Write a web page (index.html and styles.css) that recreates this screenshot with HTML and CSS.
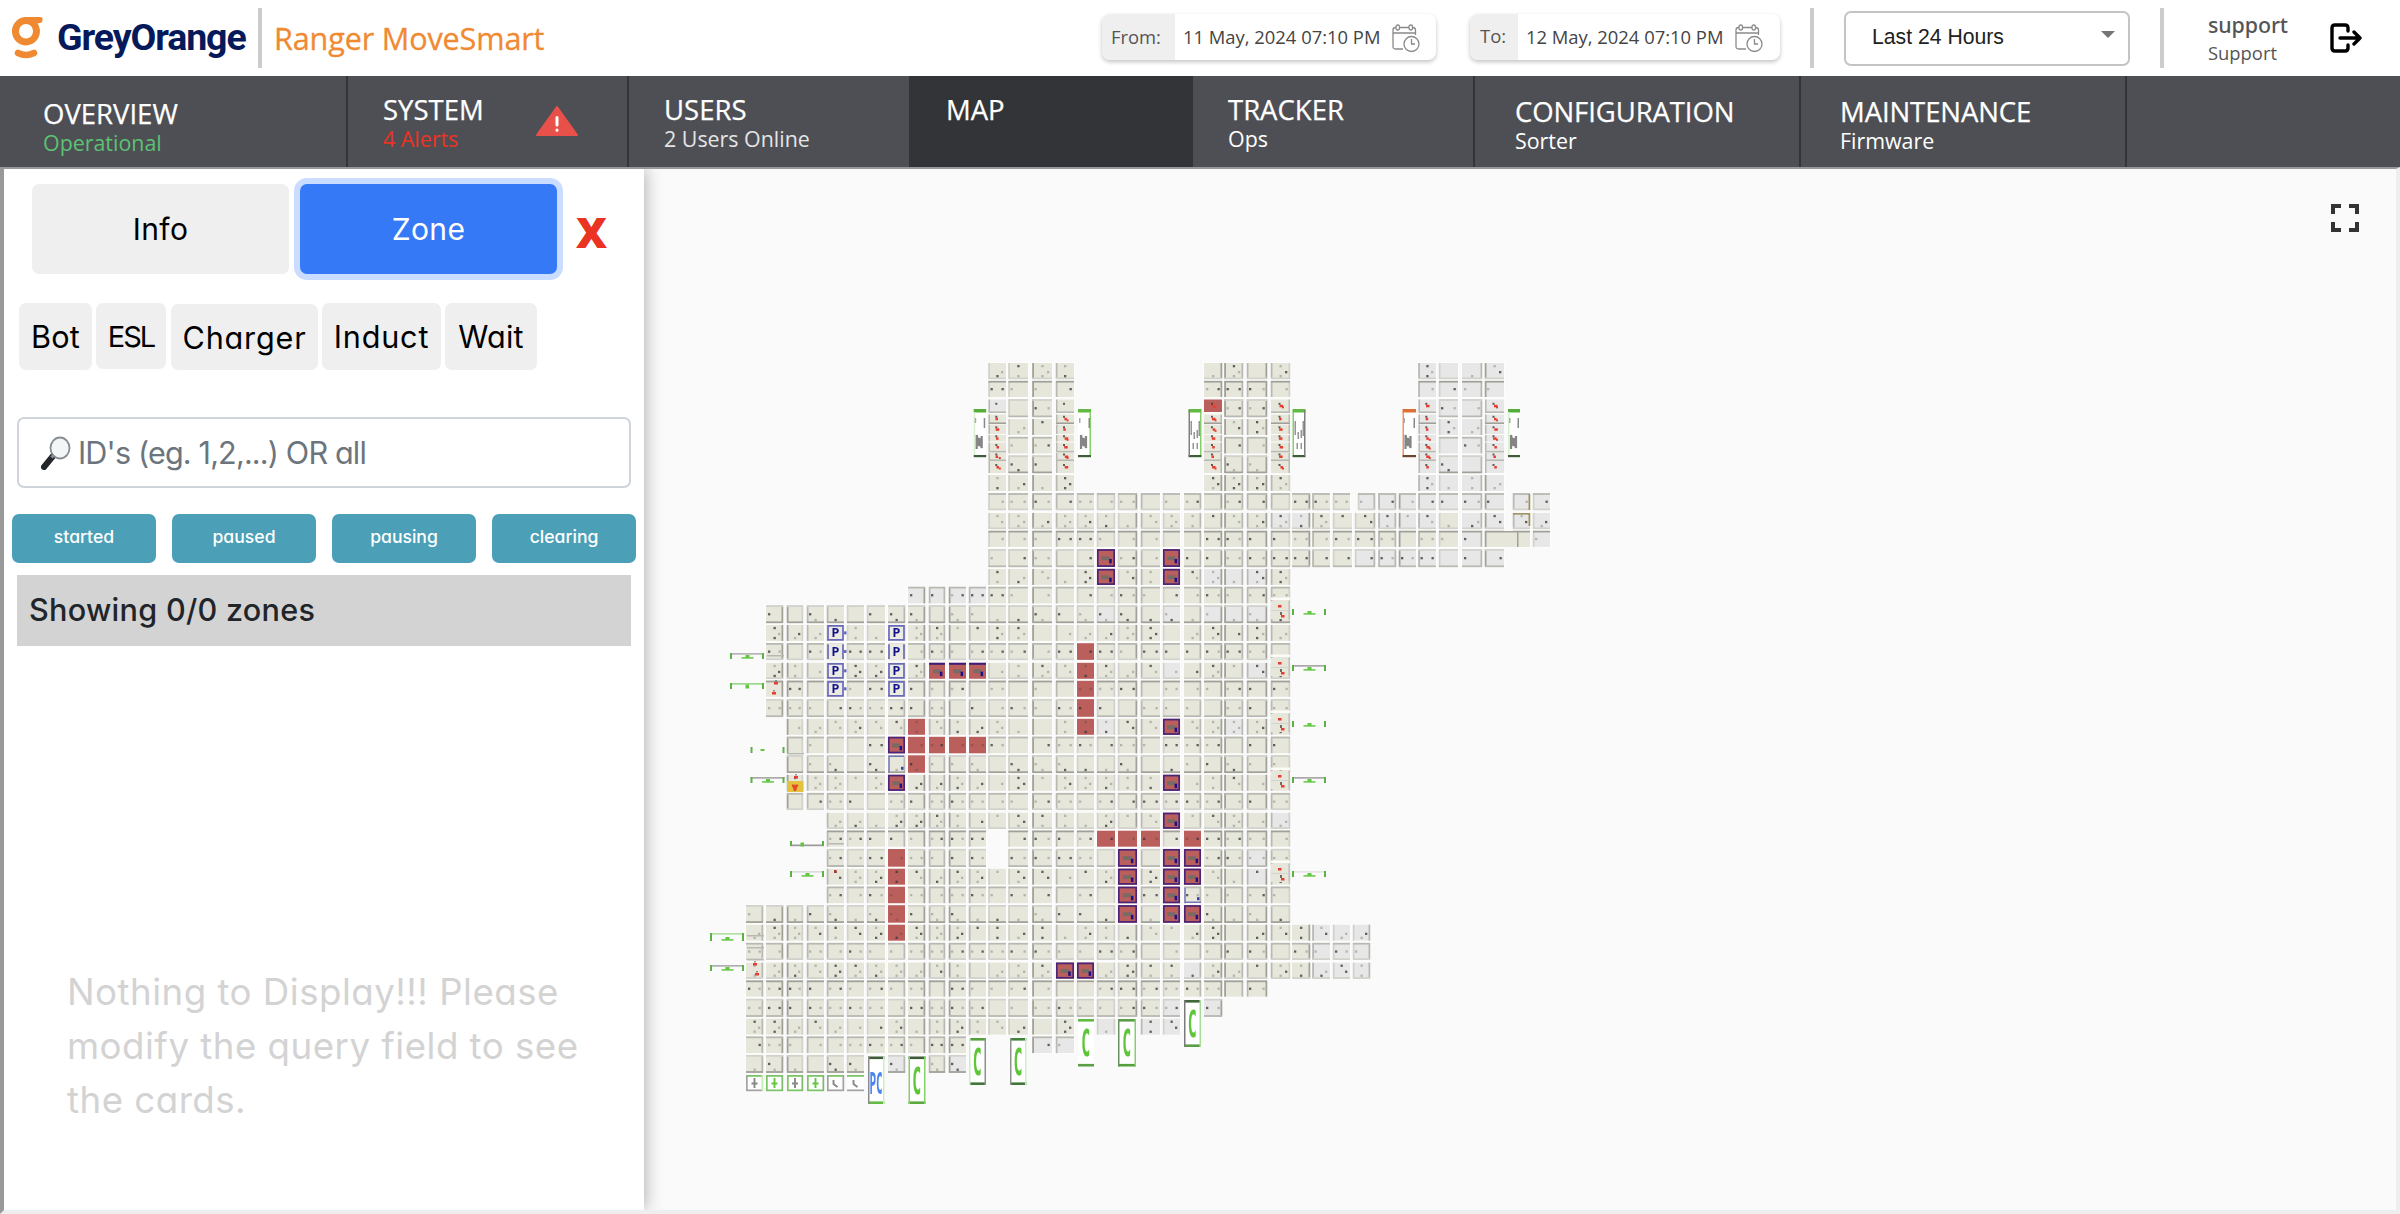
FILE: index.html
```
<!DOCTYPE html>
<html lang="en">
<head>
<meta charset="utf-8">
<title>Ranger MoveSmart</title>
<link rel="stylesheet" href="styles.css">
</head>
<body>
<header class="topbar">
  <svg class="logo" viewBox="0 0 32 42" width="32" height="42">
    <path fill="#f08a32" fill-rule="evenodd" d="M14 0H28Q31 0 30.600 3Q30 6.200 27 6.200H25.500A14 14.200 0 1 1 14 0ZM14 7A7 7.200 0 1 0 14 21.500A7 7.200 0 1 0 14 7Z"/>
    <path d="M6 36Q14 40 22 36" fill="none" stroke="#f08a32" stroke-width="6.500" stroke-linecap="round"/>
  </svg>
  <span class="brand">GreyOrange</span>
  <i class="rule"></i>
  <span class="product">Ranger MoveSmart</span>
  <div class="date date-from"><b>From:</b><span>11 May, 2024 07:10 PM</span>
    <svg width="28" height="30" viewBox="0 0 28 30" fill="none" stroke="#8a8a8a" stroke-width="1.300"><path d="M11 25H3.500Q1 25 1 22.500V6Q1 3.500 3.500 3.500H4M7.500 3.500H17M20.500 3.500Q23.500 3.500 23.500 6V11M1 9H23.500"/><rect x="4" y="1" width="3.500" height="5" rx="1.700"/><rect x="17" y="1" width="3.500" height="5" rx="1.700"/><circle cx="19.500" cy="20" r="7.500"/><path d="M19.500 15V20H23"/></svg>
  </div>
  <div class="date date-to"><b>To:</b><span>12 May, 2024 07:10 PM</span>
    <svg width="28" height="30" viewBox="0 0 28 30" fill="none" stroke="#8a8a8a" stroke-width="1.300"><path d="M11 25H3.500Q1 25 1 22.500V6Q1 3.500 3.500 3.500H4M7.500 3.500H17M20.500 3.500Q23.500 3.500 23.500 6V11M1 9H23.500"/><rect x="4" y="1" width="3.500" height="5" rx="1.700"/><rect x="17" y="1" width="3.500" height="5" rx="1.700"/><circle cx="19.500" cy="20" r="7.500"/><path d="M19.500 15V20H23"/></svg>
  </div>
  <i class="rule rule-range"></i>
  <div class="range"><span>Last 24 Hours</span><svg width="14" height="7" viewBox="0 0 14 7"><path d="M0 0H14L7 7Z" fill="#757575"/></svg></div>
  <i class="rule rule-user"></i>
  <div class="user"><strong>support</strong><span>Support</span></div>
  <svg class="logout" width="32" height="30" viewBox="0 0 32 30" fill="none" stroke="#000" stroke-width="3.400" stroke-linecap="round" stroke-linejoin="round"><path d="M18 8V5Q18 2 15 2H5Q2 2 2 5V25Q2 28 5 28H15Q18 28 18 25V22M10 15H30M24 9L30 15L24 21"/></svg>
</header>
<nav class="nav">
  <a class="tab overview"><h2>OVERVIEW</h2><p class="ok">Operational</p></a>
  <a class="tab system"><h2>SYSTEM</h2><p class="bad">4 Alerts</p>
    <svg class="alert" width="42" height="32" viewBox="0 0 42 32"><path d="M21 2L41 30H1Z" fill="#e8504a" stroke="#e8504a" stroke-width="2" stroke-linejoin="round"/><path d="M21 12.500V20M21 25V25.200" stroke="#fff" stroke-width="3" stroke-linecap="round"/></svg></a>
  <a class="tab"><h2>USERS</h2><p class="soft">2 Users Online</p></a>
  <a class="tab map-tab"><h2>MAP</h2></a>
  <a class="tab"><h2>TRACKER</h2><p>Ops</p></a>
  <a class="tab wide"><h2>CONFIGURATION</h2><p>Sorter</p></a>
  <a class="tab wide"><h2>MAINTENANCE</h2><p>Firmware</p></a>
</nav>
<main class="frame">
  <aside class="panel">
    <div class="modes"><button class="mode">Info</button><button class="mode active">Zone</button><span class="close">X</span></div>
    <div class="kinds"><button class="bot">Bot</button><button class="esl">ESL</button><button class="charger">Charger</button><button>Induct</button><button>Wait</button></div>
    <div class="search">
      <svg width="30" height="34" viewBox="0 0 30 34"><path d="M3 31L12 20" stroke="#222529" stroke-width="6" stroke-linecap="round"/><path d="M10.500 21.500L14 17.500" stroke="#8b9095" stroke-width="3"/><ellipse cx="19" cy="12" rx="9.500" ry="10.500" fill="#f3f6f7" stroke="#888d91" stroke-width="1.800"/></svg>
      <span>ID's (eg. 1,2,...) OR all</span>
    </div>
    <div class="states"><button>started</button><button>paused</button><button>pausing</button><button>clearing</button></div>
    <div class="count">Showing 0/0 zones</div>
    <p class="empty">Nothing to Display!!! Please<br>modify the query field to see<br>the cards.</p>
  </aside>
  <section class="canvas">
    <svg id="floor" width="1752" height="1041" viewBox="644 169 1752 1041"></svg>
    <svg class="expand" width="28" height="28" viewBox="0 0 28 28" fill="none" stroke="#333" stroke-width="4"><path d="M2 10V2H10M18 2H26V10M26 18V26H18M10 26H2V18"/></svg>
  </section>
</main>
<script src="map.js"></script>
</body>
</html>
```
FILE: styles.css
```
* { box-sizing: border-box; }
body { margin: 0; width: 2400px; height: 1214px; overflow: hidden; background: #fff; font-family: "Open Sans", "Noto Sans", sans-serif; display: flex; flex-direction: column; }
h2, p { margin: 0; font-weight: 400; }
button { border: 0; padding: 0; font: inherit; background: #efefef; color: #000; border-radius: 7px; }

.topbar { height: 76px; display: flex; align-items: flex-start; flex: none; white-space: nowrap; }
.logo { margin: 17px 0 0 12px; }
.brand { font: 700 37.500px/44px Roboto, sans-serif; letter-spacing: -1.100px; color: #06195a; margin: 14.500px 0 0 13px; width: 189px; }
.rule { width: 4px; height: 60px; margin-top: 8px; margin-left: 12px; background: #ccc; }
.product { font-size: 30.600px; line-height: 40px; letter-spacing: -.15px; color: #f08a32; -webkit-text-stroke: .3px #f08a32; margin: 17.500px 0 0 12px; width: 280px; }
.date { height: 46px; margin-top: 14px; display: flex; border-radius: 8px; overflow: hidden; box-shadow: 0 2px 4px rgba(0,0,0,.24); font-size: 18.400px; line-height: 46px; color: #444; background: #fff; }
.date b { font-weight: 400; background: #efefef; color: #555; }
.date svg { margin-top: 10px; }
.date-from { margin-left: 548px; width: 334px; }
.date-from b { width: 73px; padding-left: 9px; }
.date span { padding-left: 8px; width: 217px; }
.date-to { margin-left: 34px; width: 310px; }
.date-to b { width: 48px; padding-left: 10px; line-height: 44px; }
.rule-range { margin-left: 30px; }
.range { margin: 11px 0 0 30px; width: 286px; height: 55px; border: 2px solid #c4c4c4; border-radius: 7px; display: flex; justify-content: space-between; font: 21.200px/47px "Liberation Sans", Arial, sans-serif; color: #212121; padding: 0 13px 0 26px; }
.range svg { margin-top: 18px; }
.rule-user { margin-left: 30px; }
.user { margin: 10px 0 0 44px; width: 122px; color: #555; display: flex; flex-direction: column; }
.user strong { font-size: 21.400px; line-height: 29px; font-weight: 500; font-family: "Noto Sans", sans-serif; letter-spacing: -.1px; }
.user span { font-size: 18.400px; line-height: 28px; }
.logout { margin-top: 23px; }

.nav { height: 91px; background: #4e4f55; display: flex; flex: none; color: #fff; }
.tab { width: 282px; border-right: 2px solid #333438; padding: 20px 0 0 35px; position: relative; }
.tab h2 { font-size: 27.500px; line-height: 28px; -webkit-text-stroke: .25px #fff; }
.tab p { font-size: 21.400px; line-height: 28px; margin-top: 1px; }
.tab .ok { color: #5bc273; }
.tab .bad { color: #ea3323; }
.tab .soft { color: #e4e4e4; }
.overview { width: 348px; padding: 24px 0 0 43px; }
.system { width: 281px; }
.alert { position: absolute; left: 188px; top: 29px; }
.map-tab { background: #333438; }
.wide { width: 326px; padding: 22px 0 0 40px; }
.tab.wide + .wide { margin-left: -1px; width: 327px; }
.wide h2 { letter-spacing: -.1px; }

.frame { height: 1047px; border: 4px solid #eee; border-left-color: #999; border-top: 2px solid #98989c; display: flex; background: #fafafa; position: relative; z-index: 0; }
.panel { width: 640px; background: #fff; box-shadow: 2px 0 16px rgba(0,0,0,.28); position: relative; font-family: Inter, sans-serif; font-feature-settings: "cv11"; clip-path: inset(0 -30px 0 0); }
.modes { display: flex; gap: 11px; padding: 15px 0 0 28px; font-size: 30px; height: 105px; }
.mode { width: 257px; height: 90px; letter-spacing: .4px; }
.active { background: #3579f6; color: #fff; box-shadow: 0 0 0 6px #cadcff; }
.close { font: 900 43px/96px "Open Sans", sans-serif; color: #eb3323; margin-left: 8px; }
.kinds { display: flex; gap: 4px; padding: 29px 0 0 15px; font-size: 30.600px; letter-spacing: .2px; align-items: flex-start; }
.kinds button { height: 67px; padding: 0 11px; width: 92px; white-space: nowrap; letter-spacing: .2px; }
.kinds .bot { width: 73px; }
.kinds .esl { width: 70px; height: 66px; font-size: 29px; letter-spacing: -2px; }
.kinds .charger { width: 147px; margin: 1px 0 0 1px; height: 66px; letter-spacing: .8px; }
.kinds button:nth-child(4) { width: 119px; letter-spacing: .8px; }
.search { margin: 47px 13px 0; height: 71px; border: 2px solid #ced4da; border-radius: 7px; display: flex; align-items: center; padding-left: 22px; gap: 7px; font-size: 30.600px; letter-spacing: -.85px; color: #6c757d; }
.states { display: flex; gap: 16px; padding: 26px 0 0 8px; }
.states button { width: 144px; height: 49px; background: #4b9fb7; color: #fff; font-size: 17.600px; font-weight: 500; line-height: 45px; padding-bottom: 4px; }
.count { margin: 12px 13px 0; height: 71px; background: #d3d3d3; padding-left: 12px; font-size: 30.600px; font-weight: 500; line-height: 70px; letter-spacing: .27px; color: #212529; }
.empty { margin: 319px 0 0 63px; font-size: 36.700px; line-height: 54px; color: #d3d3d3; letter-spacing: .47px; }

.canvas { flex: 1; position: relative; z-index: -1; }
#floor { display: block; filter: blur(.45px); }
.expand { position: absolute; right: 37px; top: 35px; }
```
FILE: map.js
```
// Column and row extents of the floor grid
const X = [[746,763],[766,783],[787,803],[807,824],[827,844],[847,864],[867,885],[888,905],[908,925],[929,945],[949,966],[969,986],[988.5,1006],[1008.5,1028],[1032.5,1052],[1056,1074],[1077,1094],[1097,1115],[1118,1137],[1141,1160],[1163,1180],[1184,1201],[1204,1222],[1224.500,1243],[1247,1267],[1271,1290],[1292,1310],[1312.500,1330],[1333,1352],[1355,1375],[1378.500,1396],[1399,1416],[1418.500,1436],[1439,1458],[1462,1482],[1485,1504],[1513,1530],[1533,1550]];
const Y = [];
const P = [[363,379],[381,397],[399.300,417],[419,435],[437,453.500],[455.500,473],[475,491],[493.300,510]];
for (let r = 0; r < 38; r++) { const k = Math.floor(r / 8), o = k * 149.900; Y.push([P[r % 8][0] + o, P[r % 8][1] + o]); }
const colX = (r, c) => {
  if (r >= 30 && c === 28) return [1333, 1350];
  if (r >= 30 && c === 29) return [1353, 1370];
  if (r === 7 && c === 28) return [1333, 1350];
  if (r === 7 && c === 29) return [1358, 1375];
  return X[c];
};

const span = (a, b) => Array.from({ length: b - a + 1 }, (_, i) => a + i);
const rows = r => {
  if (r < 7) return [...span(12, 15), ...span(22, 25), ...span(32, 35)];
  if (r < 10) return span(12, 37);
  if (r < 11) return span(12, 35);
  if (r < 12) return span(12, 25);
  if (r < 13) return span(8, 25);
  if (r < 19) return span(1, 25);
  if (r < 24) return span(2, 25);
  if (r < 29) return span(4, 25).filter(c => !((r === 25 || r === 26) && c === 12));
  if (r < 30) return span(0, 25);
  if (r < 33) return span(0, 29);
  if (r < 34) return span(0, 24);
  if (r < 35) return span(0, 22).filter(c => c !== 21);
  if (r < 36) return [...span(0, 15), 17, 19, 20];
  if (r < 37) return [...span(0, 10), 14, 15];
  return [...span(0, 5), 7, 9, 10];
};
const grey = { 2: [12], 7: span(29, 37), 8: [25, 26, 30, 31, 32, 34, 35, 36, 37], 9: [34, 37], 10: span(29, 35), 11: [22, 23, 24], 12: [8, 9, 10, 11], 13: [17, 20, 22, 23, 24], 16: [20, 24], 19: [17, 23], 24: [25], 26: [24], 27: [24], 30: [27, 28, 29], 31: [27, 28, 29], 32: [21, 27, 28, 29], 34: [20, 22], 35: [17, 19, 20], 36: [14, 15], 37: [7, 10] };
const red = { 2: [22], 15: [16], 16: [16], 17: [16], 18: [16], 19: [8, 16], 20: [8, 9, 10, 11], 21: [8], 25: [17, 18, 19, 21], 26: [7], 27: [7], 28: [7], 29: [7], 30: [7] };
const busy = { 10: [17, 20], 11: [17, 20], 16: [9, 10, 11], 19: [20], 20: [7], 22: [7, 20], 24: [20], 26: [18, 20, 21], 27: [18, 20, 21], 28: [18, 20], 29: [18, 20, 21], 32: [15, 16] };
const has = (t, r, c) => (t[r] || []).includes(c);

// Wall weight on each side, per column and per row in the repeating band
const LEFT  = ['', '', 'd', 'm', 'm', 'l', 'l', '', '', 'm', 'd', 'm', 'l', 'l', 'd', 'm', 'l', 'l', 'l', 'm', 'l', '', '', 'd', 'm', 'm', '', 'm', 'l', 'l', 'm', 'd', 'm', 'l', '', 'd', 'm', 'l'];
const RIGHT = ['m', 'd', 'l', '', '', '', '', 'm', 'd', 'm', '', '', '', '', '', '', '', 'l', 'd', '', '', 'm', 'd', 'm', 'd', 'l', 'd', '', '', 'm', 'm', '', '', '', 'm', '', '', ''];
const TOP = ['', 'd', 'l', '', 'm', 'l', '', 'm'], BOTTOM = ['l', '', 'm', '', '', 'd', '', 'l'];
const tone = { d: '#a1a19a', m: '#b9b9b3', l: '#d2d2cc' };

let out = '';
const box = (x, y, w, h, f, o) => { out += `<rect x="${x.toFixed(1)}" y="${y.toFixed(1)}" width="${w.toFixed(1)}" height="${h.toFixed(1)}" fill="${f}"${o ? ` opacity="${o}"` : ''}/>`; };
const rnd = (a, b, k) => { const v = Math.sin(a * 12.9898 + b * 78.233 + k * 37.719) * 43758.5453; return v - Math.floor(v); };
const induct = [12, 15, 22, 25, 32, 35];
const body = (r, c) => has(grey, r, c) || (c >= 32 && r < 7) ? '#e7e7e7' : '#e6e7da';

for (let r = 0; r < 38; r++) for (const c of rows(r)) {
  const [x0, x1] = colX(r, c), [y0, y1] = Y[r], w = x1 - x0, h = y1 - y0;
  if (r > 1 && r < 6 && induct.includes(c)) continue;
  box(x0 - 1, y0 - 1, w + 2, h + 2, '#fff', .55);
  const hot = has(red, r, c), run = has(busy, r, c);
  box(x0, y0, w, h, hot || run ? '#bb5f5c' : body(r, c));
  if (run) {
    out += r === 16
      ? `<path d="M${x0} ${y0 + 1}H${x1}" stroke="#3c1d7c" stroke-width="2"/>`
      : `<rect x="${x0 + .8}" y="${y0 + .8}" width="${w - 1.6}" height="${h - 1.6}" fill="none" stroke="#4a2478" stroke-width="1.700"/>`;
    box(x0 + w * .25, y0 + h * .4, w * .45, 4, '#7a6a65'); box(x0 + w * .68, y0 + h * .55, 2.500, 4.500, '#1d0f86');
  } else {
    const m = r % 8, e = [LEFT[c], RIGHT[c], TOP[m], BOTTOM[m]];
    if (!hot) {
      if (e[0]) box(x0 - .3, y0, 1.800, h, tone[e[0]]);
      if (e[1]) box(x1 - 1.500, y0, 1.800, h, tone[e[1]]);
      if (e[2]) box(x0, y0 - .2, w, 1.800, tone[e[2]]);
      if (e[3]) box(x0, y1 - 1.500, w, 1.800, tone[e[3]]);
    }
    const v = k => { const q = rnd(r, c, k); return q > .7 ? .75 : q > .3 ? .28 : 0; };
    const dot = (x, y, k) => { const o = v(k); if (o) box(x - 1, y - 1, 2.300, 2.300, '#333', o); };
    const cx = x0 + w / 2, cy = y0 + h / 2;
    if ([1, 2, 4, 5, 7].includes(m)) dot(x0 + 3, cy, 1);
    if ([1, 2, 4, 7].includes(m)) dot(x1 - 3.500, cy, 2);
    if ([0, 3, 5, 6].includes(m)) dot(cx, y1 - 3, 3);
    if ([0, 3, 6].includes(m)) { dot(cx, y0 + 3, 4); dot(x1 - 4, cy + 1, 5); }
  }
}

// Induct columns are split into short cells with markers
const sub = [[399.500, 12.500], [414.500, 8.500], [424.500, 9.500], [435, 6.500], [442.500, 9], [453, 7], [461, 12]];
for (const c of induct) {
  const [x0, x1] = X[c];
  sub.forEach(([y, h], i) => {
    const hot = c === 22 && i === 0;
    box(x0, y, x1 - x0, h, hot ? '#bb5f5c' : c === 12 && i === 0 ? '#e7e7e7' : body(3, c));
    if (!hot && i !== 2 && i !== 3 && i !== 6) box(x0, y + h - .6, x1 - x0, 1.600, tone[i === 1 ? 'd' : 'm']);
    if (!hot) box(c === 25 || c === 22 ? x1 - 1.500 : x0, y, 1.500, h, tone.m);
    const cx = (x0 + x1) / 2 - 1, cy = y + h / 2;
    box(cx - 1, cy - 3, 2, 2, '#43352f', .8);
    if (i || c > 20) { const s = rnd(c, i, 2) > .5 ? 3.500 : 2.500; box(cx - 1 + rnd(c, i, 1) * 2, cy - 1, s, 2.500, '#e93c30'); if (rnd(c, i, 4) > .6) box(cx + 2.500, cy + .5, 2, 2, '#e93c30'); }
  });
}

// Tall induct stations
for (const [x, w, col, side] of [[973.700, 12.500, '#55ad3a', 'l'], [1078, 13, '#62b944', 'r'], [1188.500, 13, '#62b944', 'rd'], [1292.500, 13, '#62b944', 'ld'], [1402.500, 13.500, '#dd7236', 'l'], [1508, 12, '#55ad3a', '']]) {
  box(x, 409, w, 48, '#fff'); box(x, 409, w, 3.500, col); box(x, 455, w, 2.200, col === '#dd7236' ? '#70452f' : '#3f5c38');
  const weak = side === 'l' && col === '#55ad3a' || !side;
  box(side[0] === 'r' ? x + w - 1.500 : x, 412, 1.500, 43, weak ? '#d8f0d0' : col === '#dd7236' ? '#f09462' : '#86d06c');
  if (side[1]) box(side[0] === 'r' ? x : x + w - 1.500, 410, 1.500, 46, '#7d817b');
  if (side[1]) { for (const [a, b, k] of [[2, 421, 14], [5, 432, 7], [8, 430, 8], [10, 421, 15], [4, 443, 6], [8, 443, 6]]) box(x + a, b, 1.500, k, '#949494'); }
  else {
    box(x + 1, 418, 1.500, 5, '#aaa'); box(x + w - 2.500, 418, 1.500, 10, '#888');
    out += `<path d="M${x + 3} 449V435L${x + 5.500} 446V438L${x + 8} 448V436" fill="none" stroke="#858585" stroke-width="2.200"/>`;
  }
}

// Parking spots
for (const c of [4, 7]) for (let r = 14; r < 18; r++) {
  const [x0, x1] = X[c], [y0, y1] = Y[r];
  box(x0, y0, x1 - x0, y1 - y0, '#ebebe2');
  const full = r !== 15;
  out += `<path d="M${x0 + 1} ${y1 - 1}V${y0 + 1}${full ? 'H' : 'M'}${x1 - 1}${full ? '' : ' ' + (y0 + 1)}V${y1 - 1}${r === 15 ? '' : 'H' + x0}" fill="none" stroke="#6a6bb8" stroke-width="1.700"/>`;
  if (c === 4) box(x1, (y0 + y1) / 2 - 1.500, 2.500, 3, '#6a6bb8');
  out += `<text x="${(x0 + x1) / 2}" y="${y1 - 3.500}" text-anchor="middle" font-family="DejaVu Sans Mono" font-weight="700" font-size="13" fill="#12128c">P</text>`;
}

// Reserved cells
for (const [c, r] of [[7, 21], [21, 28]]) {
  const [x0, x1] = X[c], [y0, y1] = Y[r];
  out += `<path d="M${x0 + 1} ${y1}V${y0 + 1}${r === 21 ? 'H' + (x1 - 1) : 'V' + (y1 - 1) + 'H' + x1}" fill="none" stroke="#7576b8" stroke-width="1.500"/>`;
  box(x1 - 4, y1 - 6, 2.500, 3, '#3c3ca8');
}

// Markers in the outer columns
for (const y of [605, 662, 718, 775, 868]) {
  box(1271, y - 4, 19, 18, '#e6e7da'); box(1271, y - 7.500, 19, 2.500, '#fbfbf8');
  box(1278, y, 3.500, 2.500, '#e93c30'); box(1280, y + 7, 2, 3, '#47352f', .7); box(1281, y + 10, 3.500, 2.500, '#e93c30');
  box(1271, y + 5, 17, 1, '#d4d4ce'); box(1288.500, y - 4, 1.300, 18, tone.m);
}
for (const [x, y] of [[774, 682], [772, 692], [794, 776], [753, 963], [755, 973]]) { box(x, y, 4, 2.500, '#e93c30'); box(x + 1, y - 2, 2, 1.500, '#47352f', .5); }
for (const [x, y] of [[767, 655], [787, 753], [827, 843], [827, 865], [747, 935], [747, 947], [747, 959]]) box(x, y, 17, 1.500, tone.m);
box(834, 870, 2.500, 3, '#b53a30');
box(787, 781, 16.500, 11, '#e2c23f');
out += '<path d="M792 785H794.500L795 787L795.500 785H798L796 789V790.500H794V789Z" fill="#e5482c" stroke="#e5482c"/>';

// Chute brackets: x, y, height, bar colour, bar at the bottom
for (const [x, y, h, bar, low] of [[730, 653, 6, '#b5b5b5'], [730, 683, 6, '#9cd889'], [750.500, 747, 6, ''], [750.500, 777, 6, '#aaa'], [790, 841, 5, '#999', 1], [790, 871, 6, '#ddd'], [710, 933, 8, '#b3e2a4'], [710, 965, 6, '#b0b0b0'], [1292, 609, 6, ''], [1292, 665, 6, '#a8a8a8'], [1292, 721, 6, ''], [1292, 777, 6, '#a8a8a8'], [1292, 871, 6, '#e6e6e6']]) {
  if (bar) box(x, low ? y + 3.500 : y, 34, 1.700, bar);
  box(x, y, 2, h, '#5cb044'); box(x + 32, y, 2, h, '#5cb044');
  if (y === 747) { box(x + 10, y + 2, 4, 2, '#62c63e'); continue; }
  if (y === 683 || y === 841) { box(x + (y === 841 ? 10.500 : 15.500), y + 1.500, 3.500, 4, '#62c63e'); continue; }
  box(x + 11.500, y + h - 2, 12, 1.800, '#7dd062'); box(x + 15.500, y + h - 4, 4, 3, '#62c63e');
}

// Charger docks
const dock = (x, y, w, h, t, b, s, txt, col) => {
  box(x, y, w, h, '#fff');
  box(x, y, w, 2.600, t); box(x, y + h - 2.600, w, 2.600, b);
  if (s[0]) box(x, y, 1.500, h, s[0]); if (s[1]) box(x + w - 1.500, y, 1.500, h, s[1]);
  const k = txt === 'C' ? [1, 2.450] : [.78, 2.200];
  out += `<text transform="translate(${x + w / 2 - .3} ${y + h - 10.500}) scale(${k[0]} ${k[1]})" text-anchor="middle" font-family="DejaVu Sans Mono" font-weight="700" font-size="${txt === 'C' ? 15 : 14}" fill="${col}">${txt}</text>`;
};
dock(868, 1056.500, 16.500, 47.500, '#3f5c38', '#62b944', ['#8a8a8a', '#cdeec4'], 'PC', '#4a86f0');
dock(908.500, 1056.500, 17, 47.500, '#3f5c38', '#5aa83e', ['#86d06c', '#86d06c'], 'C', '#5fc63a');
dock(969, 1038, 17, 47, '#55a03c', '#42753a', ['#cdeec4', '#909090'], 'C', '#5fc63a');
dock(1010, 1038, 16.500, 47, '#42853a', '#42753a', ['#909090', '#cdeec4'], 'C', '#5fc63a');
dock(1078, 1019, 16, 47.500, '#62b944', '#5a9e45', ['', ''], 'C', '#5fc63a');
dock(1118, 1019, 18, 47.500, '#5a9e45', '#55a03c', ['#6a9160', '#86d06c'], 'C', '#5fc63a');
dock(1184, 1000, 17, 47, '#42653a', '#5a9e45', ['#7a7a7a', '#a8dd98'], 'C', '#5fc63a');

// Queue cells on the last row
for (let c = 0; c < 6; c++) {
  const [x0, x1] = X[c], g = '#7cc566', a = '#a2a2a2';
  box(x0, 1075, x1 - x0, 16, '#fdfdfd');
  box(x0, 1075, x1 - x0, 1.800, g); box(x0, 1089.500, x1 - x0, 1.700, c > 0 && c < 4 ? g : a);
  if (c < 5) { box(x0, 1075, 1.700, 16, c && c < 4 ? g : a); box(x1 - 1.500, 1075, 1.700, 16, c ? (c > 3 ? a : '#7fb870') : '#c5ebba'); }
  const m = (x0 + x1) / 2, f = c === 1 || c === 3 ? '#62c63e' : '#888';
  out += `<path d="${c < 4 ? `M${m} 1078V1088M${m - 3} 1083.500H${m + 3}` : `M${m - 2} 1080V1084L${m + 2} 1087`}" fill="none" stroke="${f}" stroke-width="1.900"/>`;
}

// Lift area at the far right
box(1503, 531, 10, 16, '#e6e7da'); box(1513, 531, 17, 16, '#e6e7da'); box(1517, 531, 1.500, 16, tone.d); box(1503, 531, 27, 1.500, tone.d);
box(1528.500, 494, 1.800, 16, '#9d9362'); box(1528.500, 513, 1.800, 13, '#9d9362'); box(1513, 513, 17, 1.600, '#9d9362');
document.getElementById('floor').innerHTML = out;
```
